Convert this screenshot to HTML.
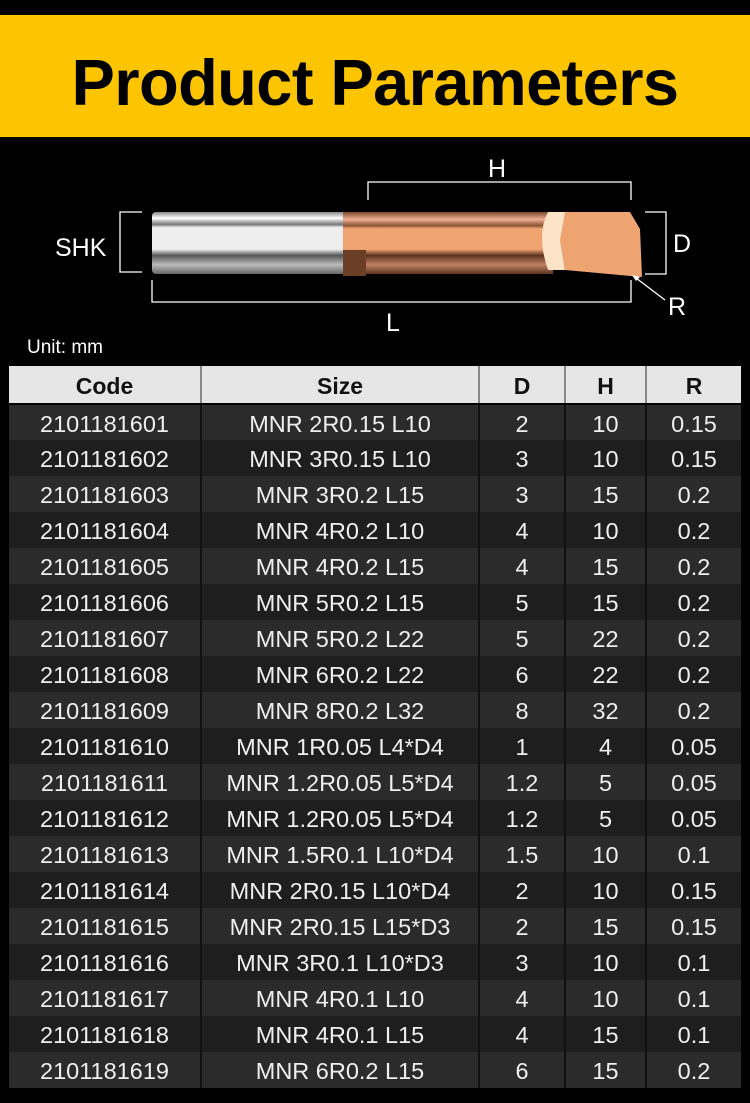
<!DOCTYPE html>
<html><head><meta charset="utf-8"><style>
*{margin:0;padding:0;box-sizing:border-box}
body{width:750px;height:1103px;background:#000;position:relative;overflow:hidden;font-family:"Liberation Sans",Arial,sans-serif}
.band{position:absolute;left:0;top:15px;width:750px;height:122px;background:#fdc400}
.band h1{position:absolute;left:0;width:750px;top:31px;text-align:center;font-size:65px;font-weight:bold;color:#000;letter-spacing:-0.6px;line-height:74px}
.unit{position:absolute;left:27px;top:337px;color:#fff;font-size:19px}
table{position:absolute;left:9px;top:366px;width:732px;border-collapse:collapse;table-layout:fixed}
td,th{text-align:center;font-size:23.5px;height:36px;padding:3px 0 0 0;border-right:2px solid #111}
th{background:#e6e6e6;color:#111;font-weight:bold;height:38px;border-right:2px solid #888;border-bottom:2px solid #000;font-size:23px}
td:last-child,th:last-child{border-right:none}
td{color:#eee}
tr:nth-child(even) td{background:#2b2b2b}
tr:nth-child(odd) td{background:#1e1e1e}
</style></head><body>
<div class="band"><h1>Product Parameters</h1></div>
<svg width="750" height="340" style="position:absolute;left:0;top:0">
<defs>
<linearGradient id="g1" x1="0" y1="0" x2="0" y2="1"><stop offset="0" stop-color="#888"/><stop offset=".1" stop-color="#fff"/><stop offset=".2" stop-color="#777"/><stop offset=".25" stop-color="#eee"/><stop offset=".6" stop-color="#eee"/><stop offset=".7" stop-color="#555"/><stop offset=".85" stop-color="#bbb"/><stop offset="1" stop-color="#666"/></linearGradient>
<linearGradient id="g2" x1="0" y1="0" x2="0" y2="1"><stop offset="0" stop-color="#7a4a30"/><stop offset=".12" stop-color="#f0b090"/><stop offset=".22" stop-color="#8a5535"/><stop offset=".27" stop-color="#f0a472"/><stop offset=".6" stop-color="#f0a472"/><stop offset=".7" stop-color="#5a3420"/><stop offset=".85" stop-color="#c08060"/><stop offset="1" stop-color="#5a3420"/></linearGradient>
</defs>
<rect x="152" y="212" width="210" height="62" fill="url(#g1)" rx="4"/>
<rect x="343" y="212" width="210" height="62" fill="url(#g2)"/>
<path d="M343 250 H366 V276 H343Z" fill="#6b3f25"/>
<path d="M555 212 H630 L640 229 L642 277 L565 270 Z" fill="#eea470"/>
<path d="M548 212 Q536 235 548 270 L565 270 L560 240 L565 212Z" fill="#fbe3c8"/>
<g stroke="#fff" stroke-width="1.3" fill="none">
<path d="M142 212 H120 V272 H142"/>
<path d="M368 200 V182 H631 V200"/>
<path d="M645 212 H666 V274 H645"/>
<path d="M152 280 V302 H631 V280"/>
<path d="M665 300 L636 278"/>
</g>
<path d="M632 275 L640 277 L636 281Z" fill="#fff"/>
<g fill="#fff" font-size="25" font-family="Liberation Sans,sans-serif">
<text x="488" y="177">H</text><text x="55" y="256">SHK</text><text x="673" y="252">D</text><text x="386" y="331">L</text><text x="668" y="315">R</text>
</g>
</svg>
<div class="unit">Unit: mm</div>
<table>
<colgroup><col style="width:192px"><col style="width:278px"><col style="width:86px"><col style="width:81px"><col style="width:95px"></colgroup>
<tr><th>Code</th><th>Size</th><th>D</th><th>H</th><th>R</th></tr>
<tr><td>2101181601</td><td>MNR 2R0.15 L10</td><td>2</td><td>10</td><td>0.15</td></tr>
<tr><td>2101181602</td><td>MNR 3R0.15 L10</td><td>3</td><td>10</td><td>0.15</td></tr>
<tr><td>2101181603</td><td>MNR 3R0.2 L15</td><td>3</td><td>15</td><td>0.2</td></tr>
<tr><td>2101181604</td><td>MNR 4R0.2 L10</td><td>4</td><td>10</td><td>0.2</td></tr>
<tr><td>2101181605</td><td>MNR 4R0.2 L15</td><td>4</td><td>15</td><td>0.2</td></tr>
<tr><td>2101181606</td><td>MNR 5R0.2 L15</td><td>5</td><td>15</td><td>0.2</td></tr>
<tr><td>2101181607</td><td>MNR 5R0.2 L22</td><td>5</td><td>22</td><td>0.2</td></tr>
<tr><td>2101181608</td><td>MNR 6R0.2 L22</td><td>6</td><td>22</td><td>0.2</td></tr>
<tr><td>2101181609</td><td>MNR 8R0.2 L32</td><td>8</td><td>32</td><td>0.2</td></tr>
<tr><td>2101181610</td><td>MNR 1R0.05 L4*D4</td><td>1</td><td>4</td><td>0.05</td></tr>
<tr><td>2101181611</td><td>MNR 1.2R0.05 L5*D4</td><td>1.2</td><td>5</td><td>0.05</td></tr>
<tr><td>2101181612</td><td>MNR 1.2R0.05 L5*D4</td><td>1.2</td><td>5</td><td>0.05</td></tr>
<tr><td>2101181613</td><td>MNR 1.5R0.1 L10*D4</td><td>1.5</td><td>10</td><td>0.1</td></tr>
<tr><td>2101181614</td><td>MNR 2R0.15 L10*D4</td><td>2</td><td>10</td><td>0.15</td></tr>
<tr><td>2101181615</td><td>MNR 2R0.15 L15*D3</td><td>2</td><td>15</td><td>0.15</td></tr>
<tr><td>2101181616</td><td>MNR 3R0.1 L10*D3</td><td>3</td><td>10</td><td>0.1</td></tr>
<tr><td>2101181617</td><td>MNR 4R0.1 L10</td><td>4</td><td>10</td><td>0.1</td></tr>
<tr><td>2101181618</td><td>MNR 4R0.1 L15</td><td>4</td><td>15</td><td>0.1</td></tr>
<tr><td>2101181619</td><td>MNR 6R0.2 L15</td><td>6</td><td>15</td><td>0.2</td></tr>
</table>
</body></html>
